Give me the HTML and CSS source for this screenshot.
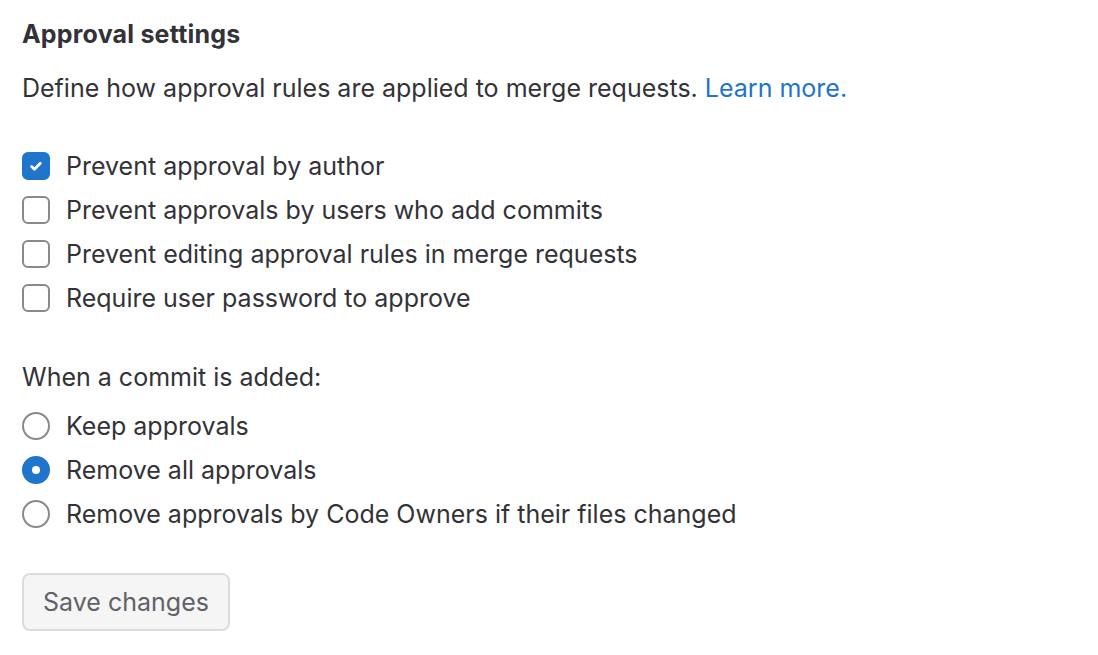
FILE: index.html
```html
<!DOCTYPE html>
<html>
<head>
<meta charset="utf-8">
<link rel="stylesheet" href="styles.css">
</head>
<body>
<div class="panel">
  <h2 class="title">Approval settings</h2>
  <p class="desc">Define how approval rules are applied to merge requests. <a class="link" href="#">Learn more.</a></p>
  <div class="group checks">
    <label class="opt"><span class="box checked"><svg viewBox="0 0 16 16" width="16" height="16"><path d="M3.6 8.6l2.9 2.7L12.3 5.2" fill="none" stroke="#fff" stroke-width="2.8" stroke-linecap="round" stroke-linejoin="round"/></svg></span>Prevent approval by author</label>
    <label class="opt"><span class="box"></span>Prevent approvals by users who add commits</label>
    <label class="opt"><span class="box"></span>Prevent editing approval rules in merge requests</label>
    <label class="opt"><span class="box"></span>Require user password to approve</label>
  </div>
  <p class="sub">When a commit is added:</p>
  <div class="group radios">
    <label class="opt"><span class="radio"></span>Keep approvals</label>
    <label class="opt"><span class="radio on"></span>Remove all approvals</label>
    <label class="opt"><span class="radio"></span>Remove approvals by Code Owners if their files changed</label>
  </div>
  <button class="btn">Save changes</button>
</div>
</body>
</html>
```
FILE: styles.css
```css
html, body {
  margin: 0;
  padding: 0;
  background: #fff;
}
body {
  font-family: Inter, "Liberation Sans", sans-serif;
  color: #333238;
  font-size: 25px;
}
.panel {
  padding: 17px 22px;
  display: flex;
  flex-direction: column;
  align-items: flex-start;
}
.title {
  margin: 0;
  font-size: 25px;
  font-weight: 700;
  letter-spacing: 0.2px;
  line-height: 34px;
}
.desc {
  margin: 20px 0 0;
  line-height: 34px;
}
.link {
  color: #1f75cb;
  text-decoration: none;
}
.group {
  display: flex;
  flex-direction: column;
  gap: 10px;
}
.checks {
  margin-top: 44px;
}
.opt {
  display: flex;
  align-items: center;
  gap: 16px;
  line-height: 34px;
  height: 34px;
}
.box {
  width: 28px;
  height: 28px;
  flex: none;
  box-sizing: border-box;
  border: 2px solid #89888d;
  border-radius: 6px;
  display: flex;
  align-items: center;
  justify-content: center;
}
.box.checked {
  background: #1f75cb;
  border-color: #1f75cb;
}
.radio {
  width: 28px;
  height: 28px;
  flex: none;
  box-sizing: border-box;
  border: 2px solid #89888d;
  border-radius: 50%;
}
.radio.on {
  border: 10px solid #1f75cb;
  background: #fff;
}
.sub {
  margin: 45px 0 0;
  line-height: 34px;
}
.radios {
  margin-top: 15px;
}
.btn {
  margin-top: 42px;
  font-family: inherit;
  font-size: 25px;
  color: #626168;
  background: #f5f5f5;
  border: 2px solid #dcdcde;
  border-radius: 8px;
  width: 208px;
  height: 58px;
  padding: 0;
}
```
